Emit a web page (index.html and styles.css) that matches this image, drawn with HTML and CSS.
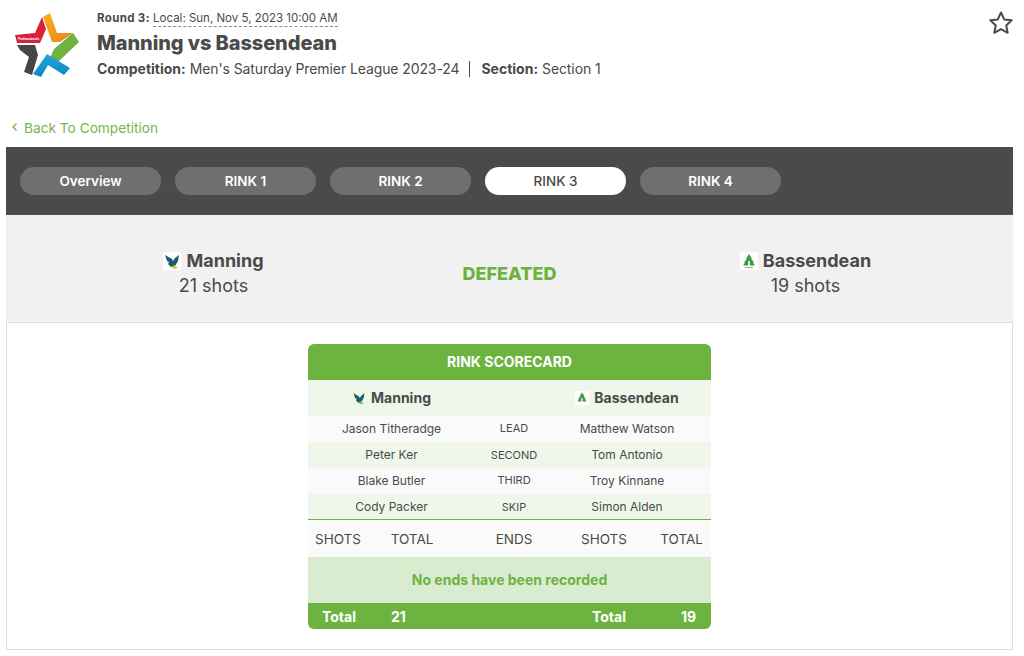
FILE: index.html
```html
<!DOCTYPE html>
<html lang="en">
<head>
<meta charset="utf-8">
<title>Manning vs Bassendean</title>
<link rel="stylesheet" href="styles.css">
</head>
<body>
<div class="page">
  <header class="head">
    <svg class="logo" viewBox="14 10 68 68" aria-hidden="true">
      <defs>
        <linearGradient id="og" x1="0" y1="0" x2="1" y2="1"><stop offset="0" stop-color="#f7b21c"/><stop offset="1" stop-color="#ee7f22"/></linearGradient>
        <linearGradient id="bl" x1="0" y1="0" x2="0" y2="1"><stop offset="0" stop-color="#22a7d8"/><stop offset="1" stop-color="#0f86cc"/></linearGradient>
      </defs>
      <polygon fill="url(#og)" points="43,17 50,13 57,33 73,33 60,42 52,42"/>
      <polygon fill="#d9213a" points="15,35 35,33 42,17 46,29 40,43 17,43"/>
      <polygon fill="#6cb33f" points="73,33 79,42 58,62 50,58 54,49"/>
      <polygon fill="#454545" points="17,45 35,45 38,55 32,75 24,72 29,57 20,50"/>
      <polygon fill="url(#bl)" points="33,74 47,54 70,68 64,75 48,65 41,77"/>
      <text class="logo-text" x="18" y="39.500">Professionals</text>
    </svg>
    <div class="head-text">
      <div class="round"><b>Round 3:</b> <span class="date">Local: Sun, Nov 5, 2023 10:00 AM</span></div>
      <h1 class="title">Manning vs Bassendean</h1>
      <div class="meta"><b>Competition:</b> <span class="meta-val">Men's Saturday Premier League 2023-24</span><span class="sep"></span><b>Section:</b> <span class="meta-val">Section 1</span></div>
    </div>
    <svg class="fav" viewBox="0 0 26 26" aria-hidden="true">
      <path d="M13 2.500l3.200 6.900 7.500.9-5.500 5.100 1.500 7.400-6.700-3.700-6.700 3.700 1.500-7.400-5.500-5.100 7.500-.9z" fill="none" stroke="#4a4a4a" stroke-width="2" stroke-linejoin="round"/>
    </svg>
  </header>

  <a class="back" href="#"><svg class="chev" viewBox="0 0 8 10" aria-hidden="true"><path d="M5.500 1.500L2 5l3.500 3.500" fill="none" stroke="#6db33f" stroke-width="1.300"/></svg>Back To Competition</a>

  <nav class="tabs">
    <a class="tab" href="#">Overview</a>
    <a class="tab" href="#">RINK 1</a>
    <a class="tab" href="#">RINK 2</a>
    <a class="tab active" href="#">RINK 3</a>
    <a class="tab" href="#">RINK 4</a>
  </nav>

  <section class="result">
    <div class="side">
      <div class="team"><svg class="badge" viewBox="0 0 18 18" aria-hidden="true"><rect width="18" height="18" fill="#fff"/><path d="M2 3l7 4 1 2 2-3 4-3-1 6-3 5-4 1-3-3 1-2-2-1z" fill="#1d5c6b"/><path d="M8 15l4-2 3 3-4 1z" fill="#d8c84a"/></svg>Manning</div>
      <div class="shots">21 shots</div>
    </div>
    <div class="outcome">DEFEATED</div>
    <div class="side">
      <div class="team"><svg class="badge" viewBox="0 0 18 18" aria-hidden="true"><rect width="18" height="18" fill="#fff"/><path d="M9 2l3 4.500h-1l3 4h-1l2 3H3l2-3H4l3-4H6z" fill="#3f9a45"/><rect x="8.200" y="9" width="1.600" height="5" fill="#fff"/><rect x="5" y="15" width="8" height="1" fill="#7fb58a"/></svg>Bassendean</div>
      <div class="shots">19 shots</div>
    </div>
  </section>

  <main class="panel">
    <div class="card">
      <div class="card-title">RINK SCORECARD</div>
      <div class="row names">
        <div class="cell"><svg class="badge small" viewBox="0 0 18 18" aria-hidden="true"><path d="M2 3l7 4 1 2 2-3 4-3-1 6-3 5-4 1-3-3 1-2-2-1z" fill="#1d5c6b"/><path d="M8 15l4-2 3 3-4 1z" fill="#8fb48a"/></svg>Manning</div>
        <div class="cell"></div>
        <div class="cell"><svg class="badge small" viewBox="0 0 18 18" aria-hidden="true"><rect width="18" height="18" fill="#fff"/><path d="M9 2l3 4.500h-1l3 4h-1l2 3H3l2-3H4l3-4H6z" fill="#3f9a45"/><rect x="8.200" y="9" width="1.600" height="5" fill="#fff"/></svg>Bassendean</div>
      </div>
      <div class="row player"><div>Jason Titheradge</div><div class="role">LEAD</div><div>Matthew Watson</div></div>
      <div class="row player alt"><div>Peter Ker</div><div class="role">SECOND</div><div>Tom Antonio</div></div>
      <div class="row player"><div>Blake Butler</div><div class="role">THIRD</div><div>Troy Kinnane</div></div>
      <div class="row player alt last"><div>Cody Packer</div><div class="role">SKIP</div><div>Simon Alden</div></div>
      <div class="ends-head"><div>SHOTS</div><div>TOTAL</div><div>ENDS</div><div>SHOTS</div><div>TOTAL</div></div>
      <div class="empty">No ends have been recorded</div>
      <div class="totals"><div>Total</div><div>21</div><div></div><div>Total</div><div>19</div></div>
    </div>
  </main>
</div>
</body>
</html>
```
FILE: styles.css
```css
* { box-sizing: border-box; }
html, body { margin: 0; padding: 0; background: #fff; }
body { font-family: Inter, "Liberation Sans", sans-serif; color: #4a4a4a; }
b { font-weight: 700; }
.page { width: 1007px; margin-left: 6px; height: 656px; overflow: hidden; }

.head { display: flex; align-items: flex-start; height: 112px; padding: 9px 0 0 8px; }
.logo { width: 68px; height: 68px; flex: none; margin-top: 1px; overflow: visible; }
.logo-text { font-size: 3.200px; fill: #fff; font-weight: 700; }
.head-text { flex: 1; margin-left: 15px; padding-top: 1px; }
.round { font-size: 11.500px; line-height: 17px; }
.round b { letter-spacing: .35px; }
.date { border-bottom: 1px dashed #8a8a8a; padding-bottom: 1px; }
.title { margin: 4px 0 0; font-size: 20px; line-height: 24px; font-weight: 800; letter-spacing: -.1px; }
.meta { margin-top: 5px; font-size: 14px; line-height: 18px; }
.meta-val { letter-spacing: -.1px; }
.sep { display: inline-block; width: 1px; height: 16px; background: #4a4a4a; margin: 0 11px 0 10px; vertical-align: -3px; }
.fav { width: 26px; height: 26px; flex: none; margin: 1px 0 0; position: relative; left: 1px; }

.back { display: flex; align-items: center; height: 32px; padding-left: 5px; color: #74b54c; font-size: 13.700px; text-decoration: none; }
.chev { width: 8px; height: 10px; margin-right: 5px; margin-top: -2px; }

.tabs { display: flex; gap: 14px; align-items: center; height: 68px; margin-top: 3px; padding-left: 14px; background: #4a4a4a; border-bottom: 1px solid #555; }
.tab { width: 141px; height: 28px; border-radius: 14px; background: #6f6f6f; color: #fff; font-size: 13.500px; font-weight: 600; line-height: 28px; text-align: center; text-decoration: none; }
.tab.active { background: #fff; color: #4a4a4a; font-weight: 500; }

.result { display: grid; grid-template-columns: repeat(3, 296px); justify-content: center; align-items: center; height: 107px; padding-top: 9px; background: #f1f1f1; text-align: center; }
.team { display: flex; justify-content: center; align-items: center; font-size: 18px; line-height: 24px; font-weight: 700; }
.badge { width: 18px; height: 18px; margin-right: 5px; flex: none; }
.shots { font-size: 18px; line-height: 24px; margin-top: 1px; }
.outcome { font-size: 18px; font-weight: 800; color: #6db33f; }

.panel { height: 328px; padding: 21px 0 0; border: 1px solid #ddd; background: #fff; }
.card { width: 403px; margin-left: 301px; border-radius: 6px; overflow: hidden; }
.card-title { height: 36px; line-height: 36px; background: #6db33f; color: #fff; text-align: center; font-size: 14px; font-weight: 700; }
.row { display: grid; grid-template-columns: 167px 78px 148px; text-align: center; align-items: center; }
.names { height: 36px; padding-bottom: 1px; background: #eef7ea; font-size: 14px; font-weight: 700; }
.cell { display: flex; justify-content: center; align-items: center; }
.badge.small { width: 14px; height: 14px; margin-right: 5px; }
.player { height: 26px; padding-bottom: 2px; background: #fafafa; font-size: 12px; }
.player.alt { padding-bottom: 1px; background: #eff7ea; }
.player.last { padding-bottom: 0; border-bottom: 1px solid #6db33f; }
.role { font-size: 11px; }
.ends-head { display: grid; grid-template-columns: 60px 88px 116px 64px 75px; height: 37px; padding-top: 1px; align-items: center; text-align: center; background: #fafafa; font-size: 13.500px; }
.ends-head div:last-child { text-align: right; padding-right: 8px; }
.empty { height: 46px; line-height: 46px; text-align: center; background: #d9ecd0; color: #6db33f; font-size: 14px; font-weight: 700; }
.totals { display: grid; grid-template-columns: 69px 184px 17px 89px 30px; height: 26px; align-items: center; padding-left: 14px; background: #6db33f; color: #fff; font-size: 14px; font-weight: 700; }
```
